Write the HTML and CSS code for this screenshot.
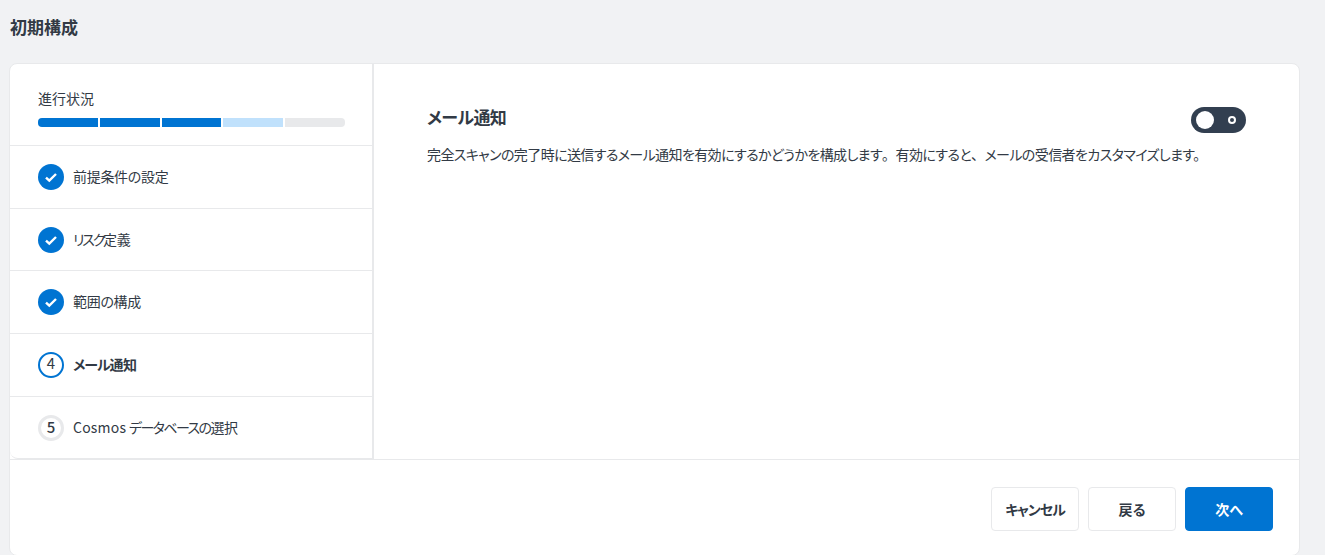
FILE: index.html
```html
<!DOCTYPE html>
<html lang="ja">
<head>
<meta charset="utf-8">
<title>初期構成</title>
<link rel="stylesheet" href="styles.css">
</head>
<body>
<h1 class="title">初期構成</h1>
<div class="card">
  <div class="main">
    <aside class="side">
      <div class="progress">
        <div class="progress-label">進行状況</div>
        <div class="bar">
          <span class="seg done"></span><span class="seg done"></span><span class="seg done"></span><span class="seg cur"></span><span class="seg"></span>
        </div>
      </div>
      <div class="step"><span class="check"><svg viewBox="0 0 26 26" width="26" height="26"><circle cx="13" cy="13" r="13" fill="#0074d2"/><path d="M8 13.6l3.3 3.1L18 10" fill="none" stroke="#fff" stroke-width="2.4"/></svg></span><span class="label">前提条件の設定</span></div>
      <div class="step"><span class="check"><svg viewBox="0 0 26 26" width="26" height="26"><circle cx="13" cy="13" r="13" fill="#0074d2"/><path d="M8 13.6l3.3 3.1L18 10" fill="none" stroke="#fff" stroke-width="2.4"/></svg></span><span class="label"><span class="kana">リスク</span>定義</span></div>
      <div class="step"><span class="check"><svg viewBox="0 0 26 26" width="26" height="26"><circle cx="13" cy="13" r="13" fill="#0074d2"/><path d="M8 13.6l3.3 3.1L18 10" fill="none" stroke="#fff" stroke-width="2.4"/></svg></span><span class="label">範囲の構成</span></div>
      <div class="step active"><span class="num cur-num">4</span><span class="label"><span class="kana-bold">メール</span>通知</span></div>
      <div class="step"><span class="num">5</span><span class="label"><span class="latin">Cosmos</span> <span class="kana-long">データベースの</span>選択</span></div>
    </aside>
    <section class="content">
      <div class="head">
        <h2>メール通知</h2>
        <span class="toggle"><span class="knob"></span><span class="ring"></span></span>
      </div>
      <p>完全スキャンの完了時に送信するメール通知を有効にするかどうかを構成します<span class="fw">。</span>有効にすると<span class="fw">、</span>メールの受信者をカスタマイズします。</p>
    </section>
  </div>
  <div class="foot">
    <button class="btn"><span class="btn-kana">キャンセル</span></button>
    <button class="btn">戻る</button>
    <button class="btn primary">次へ</button>
  </div>
</div>
</body>
</html>
```
FILE: styles.css
```css
* { box-sizing: border-box; }
html, body { margin: 0; height: 100%; overflow: hidden; }
body {
  background: #f1f2f4;
  font-family: "Noto Sans CJK JP", "Liberation Sans", sans-serif;
  font-feature-settings: "palt";
  color: #323a45;
  padding: 15px 25px 0 10px;
}
.title { margin: 0 0 25px; font-size: 17px; line-height: 23px; font-weight: 700; }
.card {
  background: #fff;
  border: 1px solid #e8e9eb;
  border-radius: 8px;
  height: 493px;
  margin-left: -1px;
  display: flex;
  flex-direction: column;
}
.main { display: flex; height: 396px; border-bottom: 1px solid #e8e9eb; }
.side { width: 364px; border-right: 2px solid #e8e9eb; border-bottom: 1px solid #e8e9eb; border-radius: 0 0 0 8px; flex: none; }
.progress { height: 82px; padding: 24px 27px 0 28px; border-bottom: 1px solid #e8e9eb; }
.progress-label { font-size: 14px; line-height: 20px; }
.bar { display: flex; gap: 2px; margin-top: 10px; }
.seg { flex: 1; height: 9px; background: #e8e9eb; }
.seg:first-child { border-radius: 4px 0 0 4px; }
.seg:last-child { border-radius: 0 4px 4px 0; }
.seg.done { background: #0074d2; }
.seg.cur { background: #c0e1fc; }
.step {
  height: 62.7px; display: flex; align-items: center; gap: 9px;
  padding-left: 28px; font-size: 14px; border-bottom: 1px solid #e8e9eb;
}
.step:last-child { border-bottom: 0; }
.step.active { font-weight: 700; }
.label { padding-bottom: 2px; letter-spacing: -0.3px; }
.kana { letter-spacing: -2.2px; }
.kana-bold { letter-spacing: -1.1px; }
.kana-long { letter-spacing: -1.6px; }
.latin { letter-spacing: 0.2px; }
.check { display: flex; }
.num {
  width: 26px; height: 26px; border-radius: 50%; border: 3px solid #e8e9eb;
  display: flex; align-items: center; justify-content: center; padding-bottom: 3px;
  font-size: 15px; line-height: 18px; font-weight: 500;
}
.cur-num { border: 2.5px solid #0074d2; font-weight: 400; }
.content { flex: 1; padding: 41px 53px 0 53px; }
.head { display: flex; justify-content: space-between; align-items: center; height: 26px; }
.head h2 { margin: 0; font-size: 17px; line-height: 24px; font-weight: 700; letter-spacing: -0.6px; position: relative; top: -1px; }
.toggle {
  width: 55px; height: 26px; border-radius: 13px; background: #323f50;
  display: flex; align-items: center; justify-content: space-between; padding: 0 10px 0 5px;
  position: relative; top: 2px;
}
.knob { width: 18px; height: 18px; border-radius: 50%; background: #fff; }
.ring { width: 8px; height: 8px; border-radius: 50%; border: 2.5px solid #fff; }
.content p { margin: 13px 0 0; font-size: 14px; line-height: 20px; white-space: nowrap; letter-spacing: -0.6px; }
.fw { font-feature-settings: normal; }
.foot { flex: 1; display: flex; justify-content: flex-end; gap: 9px; padding: 27px 26px 0 0; }
.btn {
  width: 88px; height: 44px; background: #fff; border: 1px solid #e8e9eb; border-radius: 4px;
  font: 700 14px "Noto Sans CJK JP", "Liberation Sans", sans-serif; font-feature-settings: "palt"; color: #323a45;
}
.btn-kana { letter-spacing: -1px; }
.btn.primary { background: #0074d2; border-color: #0074d2; color: #fff; }
```
